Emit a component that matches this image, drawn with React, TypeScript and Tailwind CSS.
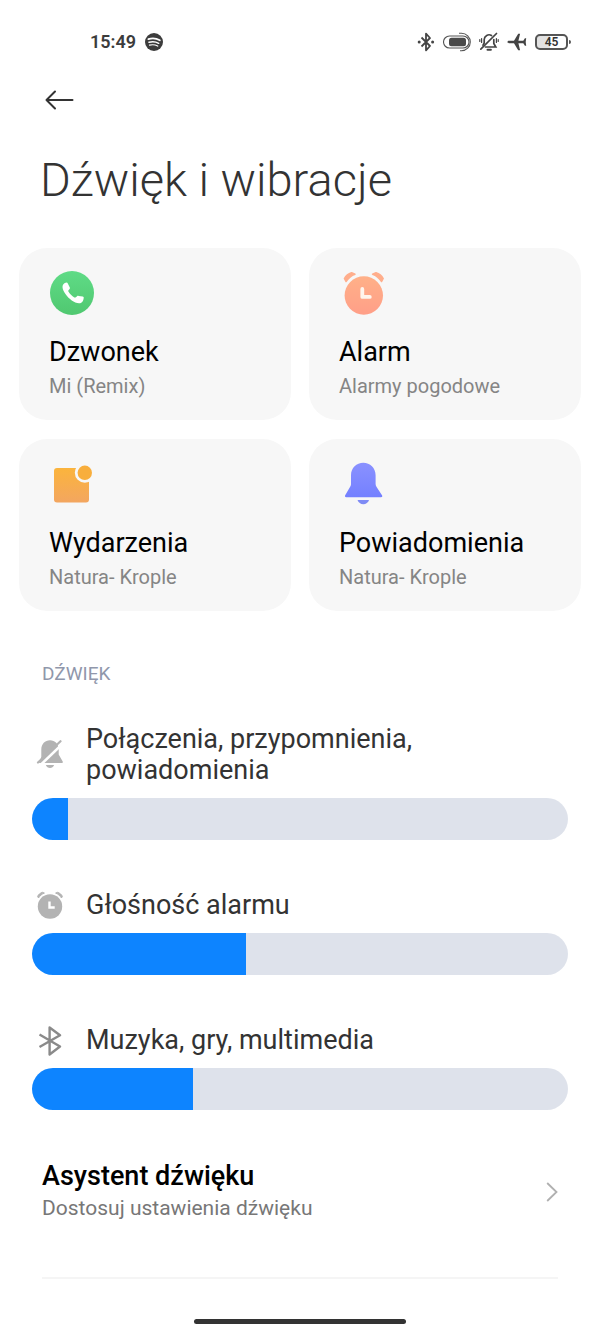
import { useState } from "react";
import type { ComponentType, ReactNode } from "react";

type IconProps = { className?: string };

function SpotifyIcon({ className }: IconProps) {
  return (
    <svg viewBox="0 0 18 18" className={className} aria-hidden="true">
      <circle cx="9" cy="9" r="9" fill="#3c3c3c" />
      <g fill="none" stroke="#fff" strokeLinecap="round">
        <path d="M3.4 6.2c3.8-1.2 8-.8 11.4 1.1" strokeWidth="1.8" />
        <path d="M4 9.3c3.3-1 6.8-.6 9.7 1" strokeWidth="1.5" />
        <path d="M4.5 12.2c2.8-.8 5.7-.5 8.2.9" strokeWidth="1.2" />
      </g>
    </svg>
  );
}

function BluetoothStatusIcon({ className }: IconProps) {
  return (
    <svg viewBox="0 0 18 20" className={className} aria-hidden="true">
      <path
        d="M4.5 5.5 13 14 9 18.300V1.700L13 6 4.500 14.500"
        fill="none"
        stroke="#444"
        strokeWidth="1.800"
        strokeLinejoin="round"
      />
      <circle cx="2.2" cy="10" r="1.5" fill="#444" />
      <circle cx="15.6" cy="10" r="1.5" fill="#444" />
    </svg>
  );
}

function EarbudsIcon({ className }: IconProps) {
  return (
    <svg viewBox="0 0 28 20" className={className} aria-hidden="true">
      <g fill="none" stroke="#555" strokeWidth="1.1">
        <path d="M20 4H6.500a6 6 0 0 0 0 12H20a6 6 0 0 0 0-12Z" />
        <path d="M16 1.200h2.500a8.800 8.800 0 0 1 0 17.600H17" />
      </g>
      <rect x="6" y="5.700" width="17" height="8.600" rx="2.500" fill="#4a4a4a" />
    </svg>
  );
}

function BellMutedStatusIcon({ className }: IconProps) {
  return (
    <svg viewBox="0 0 20 20" className={className} aria-hidden="true">
      <g fill="none" stroke="#444" strokeWidth="1.7" strokeLinecap="round">
        <path d="M12.500 3.500A4.800 4.800 0 0 0 5.200 7.500V11l-1.200 2.200" />
        <path d="M14.800 7.500V11.500l2 3.500H6.500" />
        <path d="M17.500 1.500 1.800 17.200" />
        <path d="M8.500 17.800h3.400" strokeWidth="2" />
        <path d="M2.600 6.500v4M.8 7.500v2M17.400 6.500v4M19.200 7.500v2" strokeWidth="1.2" />
      </g>
    </svg>
  );
}

function AirplaneIcon({ className }: IconProps) {
  return (
    <svg viewBox="0 0 20 18" className={className} aria-hidden="true">
      <path
        d="M.5 9c0-.8.7-1.200 1.500-1.200h5L11.200.8h1.900l-1.700 7h4.900l1.600-2.600h1.300L18.700 9l.5 3.800h-1.300l-1.600-2.600h-4.900l1.700 7h-1.900L7 10.200H2C1.200 10.200.5 9.800.5 9Z"
        fill="#444"
      />
    </svg>
  );
}

function BackIcon({ className }: IconProps) {
  return (
    <svg viewBox="0 0 30 20" className={className} aria-hidden="true">
      <path
        d="M28.500 10H2.500M11 1.500 2.500 10l8.500 8.500"
        fill="none"
        stroke="#333"
        strokeWidth="2"
        strokeLinecap="round"
        strokeLinejoin="round"
      />
    </svg>
  );
}

function PhoneTileIcon({ className }: IconProps) {
  return (
    <svg viewBox="0 0 44 44" className={className} aria-hidden="true">
      <defs>
        <linearGradient id="phone-fill" x1="0" y1="0" x2="0" y2="1">
          <stop offset="0" stopColor="#5fdb86" />
          <stop offset="1" stopColor="#50c870" />
        </linearGradient>
      </defs>
      <circle cx="22" cy="22" r="22" fill="url(#phone-fill)" />
      <path
        d="M13.200 13.500c.9-1.300 2.200-2 3.400-2 .6 0 .9.300 1.200.9l2 4.200c.3.700.1 1.200-.4 1.700l-.9.900c-.4.400-.4.900-.1 1.400 1.300 2.200 3.600 4.500 5.900 5.800.6.300 1.100.3 1.500-.1l1-.9c.6-.5 1-.6 1.800-.5l4.100.7c.8.200 1.100.6 1 1.300-.2 2.200-1.100 4-2.500 4.800-1.500.9-3.700.6-5.900-.3-4.700-2-9.500-6.700-11.800-11.600-1.100-2.400-1.400-4.700-.3-6.300Z"
        fill="#fff"
      />
    </svg>
  );
}

function AlarmTileIcon({ className }: IconProps) {
  return (
    <svg viewBox="0 0 44 44" className={className} aria-hidden="true">
      <defs>
        <linearGradient id="alarm-fill" x1="0" y1="0" x2="0" y2="1">
          <stop offset="0" stopColor="#ffb088" />
          <stop offset="1" stopColor="#ff9f88" />
        </linearGradient>
      </defs>
      <g fill="#ffae8c" stroke="#ffae8c" strokeWidth="1.5" strokeLinejoin="round">
        <path d="M4.400 7.500C6 4.600 8.400 2.700 11.600 1.700l3.400 1.500C11 4.600 8.300 7 6 10.500Z" />
        <path d="M43.200 7.500C41.600 4.600 39.200 2.700 36 1.700l-3.400 1.500C36.600 4.600 39.300 7 41.600 10.500Z" />
      </g>
      <circle cx="23.8" cy="24.500" r="19.200" fill="url(#alarm-fill)" />
      <path
        d="M22.300 18v7.900h7.500"
        fill="none"
        stroke="#fff5ec"
        strokeWidth="3.800"
        strokeLinecap="round"
        strokeLinejoin="round"
      />
    </svg>
  );
}

function EventTileIcon({ className }: IconProps) {
  return (
    <svg viewBox="0 0 44 44" className={className} aria-hidden="true">
      <defs>
        <linearGradient id="event-fill" x1="0" y1="0" x2="0" y2="1">
          <stop offset="0" stopColor="#fbb43c" />
          <stop offset="1" stopColor="#f3a660" />
        </linearGradient>
      </defs>
      <rect x="4" y="6" width="35" height="34.500" rx="3" fill="url(#event-fill)" />
      <circle cx="34.800" cy="10.800" r="10" fill="#f7f7f7" />
      <circle cx="34.800" cy="10.800" r="7.200" fill="#f8ae3c" />
    </svg>
  );
}

function BellTileIcon({ className }: IconProps) {
  return (
    <svg viewBox="0 0 44 44" className={className} aria-hidden="true">
      <defs>
        <linearGradient id="bell-fill" x1="0" y1="0" x2="0" y2="1">
          <stop offset="0" stopColor="#8a91ff" />
          <stop offset="1" stopColor="#7480ff" />
        </linearGradient>
      </defs>
      <path
        d="M11 13.200C11 6 16.500.8 23.300.8S35.600 6 35.600 13.200V22c0 1.200.4 2 1 3l5.400 8.300c.7 1.200.1 1.900-1 1.900H6.200c-1.100 0-1.700-.8-1-1.900L10 25c.7-1 1-1.800 1-3Z"
        fill="url(#bell-fill)"
      />
      <path d="M17.500 38h11.600c-.8 2.700-3.200 4.200-5.800 4.200s-5-1.500-5.800-4.200Z" fill="#7f8bf5" />
    </svg>
  );
}

function BellMutedIcon({ className }: IconProps) {
  return (
    <svg viewBox="0 0 28 30" className={className} aria-hidden="true">
      <path
        d="M5.300 9.500C5.300 4 9 .2 14 .2s8.700 3.800 8.700 9.300v5l4 7c.4.900 0 1.500-.9 1.500H3l2.300-6Z"
        fill="#b3b3b3"
      />
      <path d="M4.500 25 28 2.500" stroke="#fff" strokeWidth="2.600" />
      <path d="M2 22.500 24.500 1.200" stroke="#b3b3b3" strokeWidth="2.200" strokeLinecap="round" />
      <path d="M9.800 24.900h8.300c-.7 2-2.300 3-4.100 3s-3.500-1-4.200-3Z" fill="#b3b3b3" />
    </svg>
  );
}

function AlarmIcon({ className }: IconProps) {
  return (
    <svg viewBox="0 0 28 30" className={className} aria-hidden="true">
      <g fill="#b3b3b3">
        <g stroke="#b3b3b3" strokeLinejoin="round">
          <path d="M1.600 5.300C2.600 3.400 4.200 2 6.400 1.300l2 .8C5.800 3.100 4 4.700 2.500 7Z" />
          <path d="M26.400 5.300C25.400 3.400 23.800 2 21.600 1.300l-2 .8C22.200 3.100 24 4.700 25.500 7Z" />
        </g>
        <circle cx="14" cy="15.500" r="12.200" />
      </g>
      <path d="M13.500 10.500v6h5.200" fill="none" stroke="#fff" strokeWidth="2.400" />
    </svg>
  );
}

function BluetoothIcon({ className }: IconProps) {
  return (
    <svg viewBox="0 0 28 30" className={className} aria-hidden="true">
      <path
        d="M3.500 8.500 24 20.500 13.600 28.500V1.500L24 9.300 3.500 21"
        fill="none"
        stroke="#8a8a8a"
        strokeWidth="2.400"
        strokeLinejoin="round"
      />
    </svg>
  );
}

function ChevronIcon({ className }: IconProps) {
  return (
    <svg viewBox="0 0 12 20" className={className} aria-hidden="true">
      <path d="M1.200 1 10.500 10l-9.300 9" fill="none" stroke="#b0b0b0" strokeWidth="1.8" />
    </svg>
  );
}

const tiles: { title: string; value: string; icon: ComponentType<IconProps> }[] = [
  { title: "Dzwonek", value: "Mi (Remix)", icon: PhoneTileIcon },
  { title: "Alarm", value: "Alarmy pogodowe", icon: AlarmTileIcon },
  { title: "Wydarzenia", value: "Natura- Krople", icon: EventTileIcon },
  { title: "Powiadomienia", value: "Natura- Krople", icon: BellTileIcon },
];

const MAX_VOLUME = 30;

const volumes: { id: string; label: string; level: number; icon: ComponentType<IconProps> }[] = [
  { id: "ring", label: "Połączenia, przypomnienia, powiadomienia", level: 2, icon: BellMutedIcon },
  { id: "alarm", label: "Głośność alarmu", level: 12, icon: AlarmIcon },
  { id: "media", label: "Muzyka, gry, multimedia", level: 9, icon: BluetoothIcon },
];

function Battery({ children }: { children: ReactNode }) {
  return (
    <div className="flex items-center gap-px">
      <span className="flex h-4 w-[33px] items-center justify-center rounded-[5px] border-2 border-[#555] bg-linear-to-r from-[#e2e2e2] from-45% to-white to-45% text-xs font-semibold text-[#333]">
        {children}
      </span>
      <span className="h-1 w-0.5 rounded-r bg-[#555]" />
    </div>
  );
}

function StatusBar() {
  return (
    <div className="flex items-center justify-between pt-7 pr-[29px] pl-[90px]">
      <div className="flex items-center gap-[9px]">
        <span className="text-lg font-semibold text-[#3c3c3c]">15:49</span>
        <SpotifyIcon className="size-[18px]" />
      </div>
      <div className="flex items-center gap-2">
        <BluetoothStatusIcon className="h-5 w-[18px]" />
        <EarbudsIcon className="h-5 w-7" />
        <BellMutedStatusIcon className="size-5" />
        <AirplaneIcon className="h-[18px] w-5" />
        <Battery>45</Battery>
      </div>
    </div>
  );
}

function SoundTile({ title, value, icon: Icon }: { title: string; value: string; icon: ComponentType<IconProps> }) {
  return (
    <button type="button" className="flex flex-col items-start rounded-[28px] bg-[#f7f7f7] px-[30px] pt-[23px] pb-5 text-left">
      <Icon className="ml-px size-11" />
      <span className="mt-[21px] text-[27px] leading-8 text-black">{title}</span>
      <span className="mt-1 text-xl leading-7 text-[#858585]">{value}</span>
    </button>
  );
}

function VolumeRow({
  id,
  label,
  initial,
  icon: Icon,
}: {
  id: string;
  label: string;
  initial: number;
  icon: ComponentType<IconProps>;
}) {
  const [level, setLevel] = useState(initial);
  const fill = (level / MAX_VOLUME) * 100;

  return (
    <div>
      <div className="flex items-center gap-[22px] pr-24 pl-1">
        <Icon className="h-[30px] w-7 shrink-0" />
        <label htmlFor={id} className="text-[27px] leading-[31px] text-[#333]">
          {label}
        </label>
      </div>
      <input
        id={id}
        type="range"
        min={0}
        max={MAX_VOLUME}
        value={level}
        onChange={(e) => setLevel(Number(e.target.value))}
        className="mt-3 block h-[42px] w-full appearance-none rounded-full [&::-webkit-slider-thumb]:size-0 [&::-webkit-slider-thumb]:appearance-none"
        style={{ background: `linear-gradient(to right, #0d84ff ${fill}%, #dee2eb ${fill}%)` }}
      />
    </div>
  );
}

export default function App() {
  return (
    <div className="flex min-h-screen flex-col bg-white font-[Roboto,sans-serif]">
      <StatusBar />

      <header className="px-10 pt-[34px]">
        <button type="button" aria-label="Wstecz" className="ml-1 block">
          <BackIcon className="h-5 w-[30px]" />
        </button>
        <h1 className="mt-10 text-[47px] leading-[60px] font-light text-[#333]">Dźwięk i wibracje</h1>
      </header>

      <main>
        <section className="mt-[38px] grid grid-cols-2 gap-x-[18px] gap-y-[19px] px-[19px]">
          {tiles.map((tile) => (
            <SoundTile key={tile.title} {...tile} />
          ))}
        </section>

        <section className="mt-[49px] px-8">
          <h2 className="pl-2.5 text-[19px] leading-7 text-[#9097ab]">DŹWIĘK</h2>
          <div className="mt-9 flex flex-col gap-[50px]">
            {volumes.map((v) => (
              <VolumeRow key={v.id} id={v.id} label={v.label} initial={v.level} icon={v.icon} />
            ))}
          </div>
        </section>

        <section className="mt-[50px] px-[42px]">
          <a href="#asystent" className="flex items-center justify-between border-b-2 border-[#f5f5f5] pb-[53px]">
            <span className="flex flex-col">
              <span className="text-[27px] leading-8 font-medium text-black">Asystent dźwięku</span>
              <span className="text-[21px] leading-8 text-[#777]">Dostosuj ustawienia dźwięku</span>
            </span>
            <ChevronIcon className="h-5 w-3" />
          </a>
        </section>
      </main>

      <footer className="mt-auto flex justify-center pt-8 pb-[9px]">
        <span className="h-[5px] w-[212px] rounded-full bg-[#333]" />
      </footer>
    </div>
  );
}
